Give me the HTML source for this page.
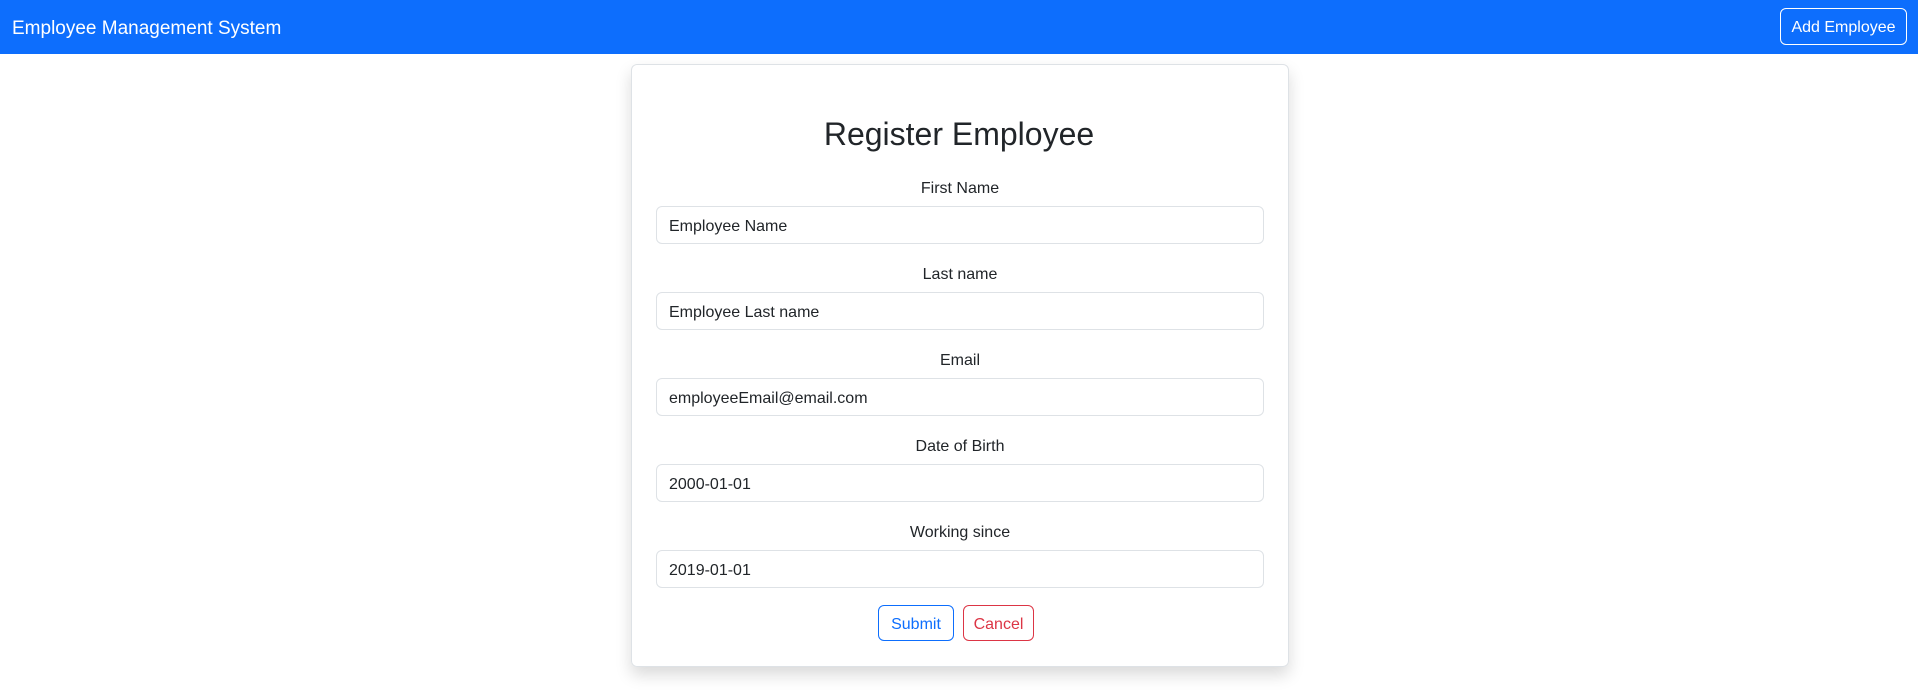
<!DOCTYPE html>
<html><head><style>
*{box-sizing:border-box;margin:0;padding:0}
body{width:1918px;height:693px;background:#fff;font-family:"Liberation Sans",sans-serif;color:#212529;position:relative;overflow:hidden}
.nav{position:absolute;left:0;top:0;width:1918px;height:54px;background:#0d6efd}
.brand{position:absolute;left:12px;top:18px;color:#fff;font-size:19px}
.add{position:absolute;left:1780px;top:8px;width:127px;height:37px;border:1px solid #fff;border-radius:6px;color:#fff;font-size:16px;text-align:center;line-height:37px}
.card{position:absolute;left:631px;top:64px;width:658px;height:603px;border:1px solid #dee2e6;border-radius:6px;box-shadow:0 8px 16px rgba(0,0,0,.15)}
h2{position:absolute;left:0;width:100%;top:116px;text-align:center;font-size:32px;font-weight:500}
.lbl{position:absolute;left:631px;width:658px;text-align:center;font-size:16px}
.inp{position:absolute;left:656px;width:608px;height:38px;border:1px solid #dee2e6;border-radius:6px;font-size:16px;padding-left:12px;line-height:40px}
.btn{position:absolute;top:605px;height:36px;border-radius:6px;font-size:16px;text-align:center;line-height:38px}
</style></head><body>
<div class="nav"><div class="brand">Employee Management System</div><div class="add">Add Employee</div></div>
<div class="card"></div>
<h2>Register Employee</h2>
<div class="lbl" style="top:180px">First Name</div>
<div class="inp" style="top:206px">Employee Name</div>
<div class="lbl" style="top:266px">Last name</div>
<div class="inp" style="top:292px">Employee Last name</div>
<div class="lbl" style="top:352px">Email</div>
<div class="inp" style="top:378px">employeeEmail@email.com</div>
<div class="lbl" style="top:438px">Date of Birth</div>
<div class="inp" style="top:464px">2000-01-01</div>
<div class="lbl" style="top:524px">Working since</div>
<div class="inp" style="top:550px">2019-01-01</div>
<div class="btn" style="left:878px;width:76px;border:1px solid #0d6efd;color:#0d6efd">Submit</div>
<div class="btn" style="left:963px;width:71px;border:1px solid #dc3545;color:#dc3545">Cancel</div>
</body></html>
